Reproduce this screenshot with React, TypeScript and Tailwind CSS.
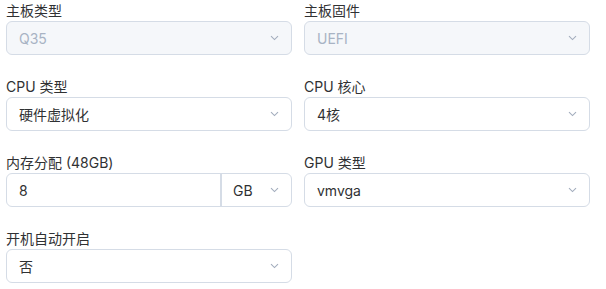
import type { ReactNode } from "react";

const FONT = "font-['Inter','Noto_Sans_CJK_SC',sans-serif]";

function Chevron() {
  return (
    <svg width="9" height="6" viewBox="0 0 9 6" className="shrink-0 text-[#a3adbd]">
      <path d="M1 1.2 4.5 4.6 8 1.2" fill="none" stroke="currentColor" strokeWidth="1.1" />
    </svg>
  );
}

function Field({ label, children }: { label: string; children: ReactNode }) {
  return (
    <div className="flex flex-col">
      <div className="h-5 text-[14px] leading-5 text-[#303133]">{label}</div>
      {children}
    </div>
  );
}

function Select({ value, disabled = false }: { value: string; disabled?: boolean }) {
  return (
    <div
      className={`flex h-[34px] items-center justify-between rounded-[6px] border border-[#d5dce6] pl-3 pr-[12px] text-[14px] ${
        disabled ? "bg-[#f5f7fa] text-[#a8b3c4]" : "bg-white text-[#303133]"
      }`}
    >
      <span>{value}</span>
      <Chevron />
    </div>
  );
}

export default function App() {
  return (
    <div className={`min-h-screen bg-white pl-[6px] pt-px ${FONT}`}>
      <div className="grid w-[584px] grid-cols-2 gap-x-3 gap-y-[22px]">
        <Field label="主板类型">
          <Select value="Q35" disabled />
        </Field>
        <Field label="主板固件">
          <Select value="UEFI" disabled />
        </Field>
        <Field label="CPU 类型">
          <Select value="硬件虚拟化" />
        </Field>
        <Field label="CPU 核心">
          <Select value="4核" />
        </Field>
        <Field label="内存分配 (48GB)">
          <div className="flex h-[34px] rounded-[6px] border border-[#d5dce6] bg-white text-[14px] text-[#303133]">
            <div className="flex flex-1 items-center border-r-2 border-[#d5dce6] pl-3">8</div>
            <div className="flex w-[69px] items-center justify-between pl-[11px] pr-[12px]">
              <span>GB</span>
              <Chevron />
            </div>
          </div>
        </Field>
        <Field label="GPU 类型">
          <Select value="vmvga" />
        </Field>
        <Field label="开机自动开启">
          <Select value="否" />
        </Field>
      </div>
    </div>
  );
}
